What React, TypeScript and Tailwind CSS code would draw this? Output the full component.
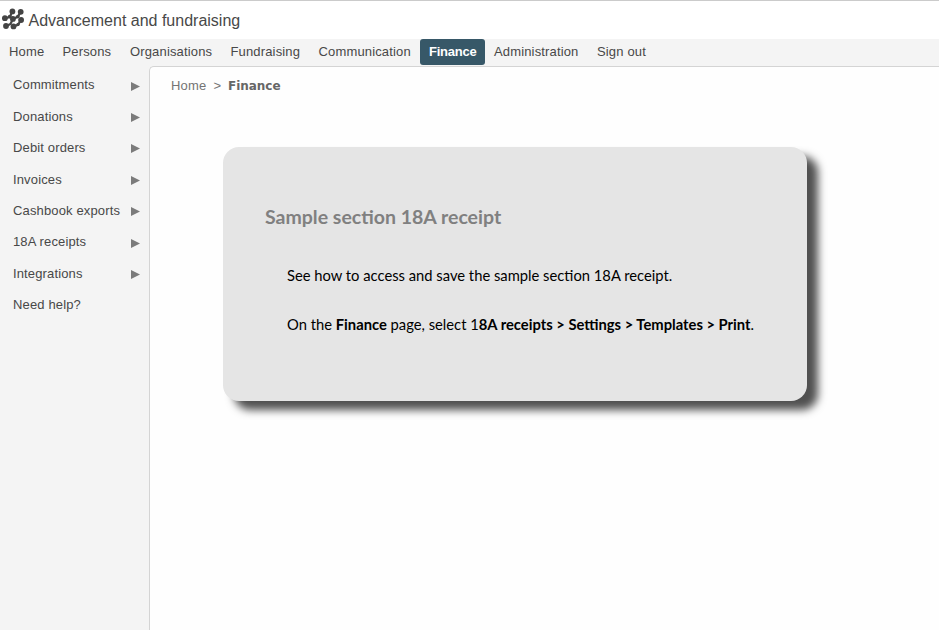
const navItems = [
  { label: "Home", box: "w-[53.5px]" },
  { label: "Persons", box: "w-[67.5px]" },
  { label: "Organisations", box: "w-[100.5px]" },
  { label: "Fundraising", box: "w-[88px]" },
  { label: "Communication", box: "w-[110.5px]" },
  { label: "Finance", box: "w-[65px]", active: true },
  { label: "Administration", box: "w-[103px]" },
  { label: "Sign out", box: "w-[68px]" },
];

const sideItems = [
  "Commitments",
  "Donations",
  "Debit orders",
  "Invoices",
  "Cashbook exports",
  "18A receipts",
  "Integrations",
  "Need help?",
];

function Logo() {
  return (
    <svg className="mt-[7px] ml-[1px] shrink-0" width="24" height="23" viewBox="1 8 24 23" fill="#444" stroke="#444">
      <path
        d="M12.4 11.2 L10 17 L5 18.3 M20.7 11.5 L18 16.6 L12.8 19.2 M12.8 19.2 L10.5 24 L6 26.3 M21 20 L18 24.8 L13.5 26.6"
        fill="none"
        strokeWidth="2.2"
      />
      <g stroke="none">
        <circle cx="12.4" cy="11.4" r="2.9" />
        <circle cx="9.6" cy="16.6" r="1.8" />
        <circle cx="4.9" cy="18.2" r="2.9" />
        <circle cx="20.7" cy="11.8" r="2.9" />
        <circle cx="17.8" cy="16.6" r="1.8" />
        <circle cx="12.9" cy="18.9" r="2.9" />
        <circle cx="6" cy="26" r="2.9" />
        <circle cx="21.1" cy="20" r="2.9" />
        <circle cx="18" cy="24.4" r="1.7" />
        <circle cx="13.5" cy="26.4" r="2.9" />
      </g>
    </svg>
  );
}

export default function App() {
  return (
    <div className="flex h-[630px] w-[939px] flex-col overflow-hidden bg-[#f4f4f4] font-['Liberation_Sans',Arial,sans-serif] text-[13px] text-[#484848]">
      <header className="flex h-[39px] shrink-0 border-t border-[#cbcbcb] bg-white">
        <Logo />
        <h1 className="mt-[10px] ml-[3.5px] text-[16px] leading-5">Advancement and fundraising</h1>
      </header>
      <nav className="flex h-[27px] shrink-0">
        {navItems.map((item) => (
          <a
            key={item.label}
            className={
              item.active
                ? "h-[26px] w-[65px] rounded-[3px] bg-[#375868] pl-[9px] leading-[25px] font-bold tracking-[-0.25px] text-white"
                : `${item.box} h-[26px] pl-[9px] leading-[25px] tracking-[0.15px]`
            }
          >
            {item.label}
          </a>
        ))}
      </nav>
      <div className="flex min-h-0 flex-1">
        <aside className="w-[149px] shrink-0 pt-[3.5px]">
          {sideItems.map((label, i) => (
            <div key={label} className="flex h-[31.4px] items-center pr-[9px] pl-[13px] tracking-[0.14px]">
              <span className="flex-1 whitespace-nowrap">{label}</span>
              {i < 7 && (
                <svg className="mt-[2px]" width="9" height="9" viewBox="0 0 9 9" fill="#7b7b7b">
                  <path d="M0 0 L9 4.5 L0 9 Z" />
                </svg>
              )}
            </div>
          ))}
        </aside>
        <main className="flex-1 rounded-tl-[5px] border-t border-l border-[#d4d4d4] bg-[#fefefe]">
          <div className="flex h-[37px] items-center pl-[21px] text-[#747474]">
            <span className="tracking-[0.2px]">Home</span>
            <span className="ml-[7px]">&gt;</span>
            <span className="ml-[7px] font-['DejaVu_Sans',sans-serif] text-[12px] font-bold tracking-[-0.05px] text-[#666]">Finance</span>
          </div>
          <section className="mt-[42.5px] ml-[73px] h-[254.5px] w-[584px] rounded-[16px] bg-[#e5e5e5] pt-[59.5px] pl-[42px] font-['Lato',sans-serif] text-black shadow-[11px_9px_9px_0px_#505050]">
            <h2 className="text-[19.5px] leading-[22px] font-bold text-[#808080]">Sample section 18A receipt</h2>
            <p className="mt-[37px] ml-[22px] text-[14.75px] leading-5">See how to access and save the sample section 18A receipt.</p>
            <p className="mt-[29px] ml-[22px] text-[14.75px] leading-5 whitespace-nowrap">
              On the <b>Finance</b> page, select 1<b>8A receipts &gt; Settings &gt; Templates &gt; Print</b>.
            </p>
          </section>
        </main>
      </div>
    </div>
  );
}
